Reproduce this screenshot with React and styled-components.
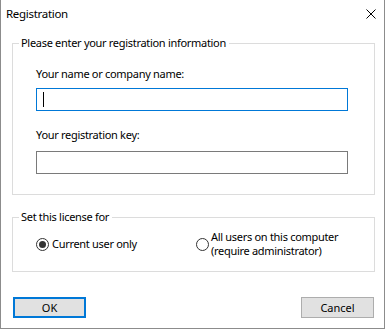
import React from "react";
import styled, { createGlobalStyle } from "styled-components";

const GlobalStyle = createGlobalStyle`
  html, body { margin: 0; padding: 0; background: #ffffff; }
  body {
    font-family: "Segoe UI", "Noto Sans", "Liberation Sans", sans-serif;
    font-size: 11px;
    letter-spacing: -0.3px;
    color: #000;
  }
`;

const Window = styled.div`
  box-sizing: border-box;
  width: 385px;
  height: 329px;
  background: #fff;
  border: 1px solid #8c8c8c;
  border-top: none;
  display: flex;
  flex-direction: column;
`;

const TitleBar = styled.div`
  box-sizing: border-box;
  height: 31px;
  padding: 0 8px 3px 5px;
  display: flex;
  align-items: center;
  justify-content: space-between;
`;

const Title = styled.span`
  line-height: 14px;
  font-size: 11.5px;
`;

const Body = styled.div`
  padding: 0 9px 0 11px;
  display: flex;
  flex-direction: column;
`;

const Group = styled.fieldset`
  margin: ${(p) => p.$top}px 0 0 0;
  padding: 0;
  border: 1px solid #dcdcdc;
  min-inline-size: 0;
`;

const Legend = styled.legend`
  margin-left: 6px;
  padding: 0 3px 0 2px;
  line-height: 14px;
`;

const GroupBody = styled.div`
  padding: ${(p) => p.$pad};
  display: flex;
  flex-direction: column;
  align-items: flex-start;
`;

const FieldLabel = styled.label`
  display: block;
  line-height: 14px;
  margin: ${(p) => p.$top}px 0 ${(p) => p.$bottom}px 0;
`;

const InputWrap = styled.div`
  position: relative;
  width: 312px;
  height: 23px;
`;

const TextInput = styled.input`
  box-sizing: border-box;
  display: block;
  width: 100%;
  height: 100%;
  margin: 0;
  padding: 0 6px;
  border: 1px solid ${(p) => (p.$focused ? "#0078d7" : "#7a7a7a")};
  background: #fff;
  outline: none;
  font: inherit;
  caret-color: transparent;
`;

const Caret = styled.span`
  position: absolute;
  left: 7px;
  top: 4px;
  width: 1px;
  height: 15px;
  background: #000;
`;

const RadioRow = styled.div`
  display: grid;
  grid-template-columns: 160px auto;
  align-items: center;
  height: 28px;
`;

const RadioOption = styled.label`
  display: flex;
  align-items: center;
  gap: ${(p) => p.$gap}px;
  line-height: 14px;
`;

const RadioCircle = styled.span`
  box-sizing: border-box;
  width: 13px;
  height: 13px;
  flex: none;
  border-radius: 50%;
  border: 1px solid #333;
  background: #fff;
  display: flex;
  align-items: center;
  justify-content: center;
  &::after {
    content: "";
    width: 7px;
    height: 7px;
    border-radius: 50%;
    background: ${(p) => (p.$checked ? "#333" : "transparent")};
  }
`;

const ButtonRow = styled.div`
  margin-top: 25px;
  padding: 0 10px 0 12px;
  display: flex;
  justify-content: space-between;
`;

const Button = styled.button`
  box-sizing: border-box;
  width: 73px;
  height: 21px;
  margin: 0;
  padding: 0;
  background: #e1e1e1;
  border: ${(p) => (p.$default ? "2px solid #0078d7" : "1px solid #adadad")};
  font: inherit;
  color: #000;
  line-height: 14px;
`;

function CloseIcon() {
  return (
    <svg width="10" height="10" viewBox="0 0 10 10" aria-hidden="true">
      <path d="M0.5 0.5 L9.5 9.5 M9.5 0.5 L0.5 9.5" stroke="#000" strokeWidth="1" fill="none" />
    </svg>
  );
}

export default function App() {
  return (
    <>
      <GlobalStyle />
      <Window>
        <TitleBar>
          <Title>Registration</Title>
          <CloseIcon />
        </TitleBar>
        <Body>
          <Group $top={5}>
            <Legend>Please enter your registration information</Legend>
            <GroupBody $pad="17px 0 20px 23px">
              <FieldLabel $top={0} $bottom={7}>Your name or company name:</FieldLabel>
              <InputWrap>
                <TextInput $focused defaultValue="" />
                <Caret />
              </InputWrap>
              <FieldLabel $top={17} $bottom={9}>Your registration key:</FieldLabel>
              <InputWrap>
                <TextInput defaultValue="" />
              </InputWrap>
            </GroupBody>
          </Group>
          <Group $top={15}>
            <Legend>Set this license for</Legend>
            <GroupBody $pad="6px 0 13px 23px">
              <RadioRow>
                <RadioOption $gap={3}>
                  <RadioCircle $checked />
                  <span>Current user only</span>
                </RadioOption>
                <RadioOption $gap={2}>
                  <RadioCircle />
                  <span>
                    All users on this computer
                    <br />
                    (require administrator)
                  </span>
                </RadioOption>
              </RadioRow>
            </GroupBody>
          </Group>
        </Body>
        <ButtonRow>
          <Button $default>OK</Button>
          <Button>Cancel</Button>
        </ButtonRow>
      </Window>
    </>
  );
}
